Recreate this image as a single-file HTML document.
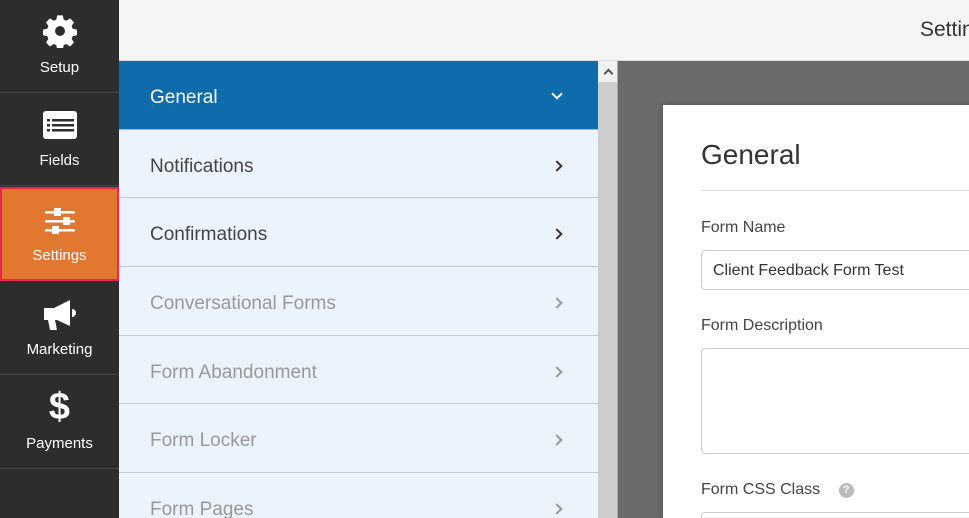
<!DOCTYPE html>
<html><head><meta charset="utf-8"><style>
*{margin:0;padding:0;box-sizing:border-box}
html,body{width:969px;height:518px;overflow:hidden}
body{position:relative;font-family:"Segoe UI","Liberation Sans",sans-serif;background:#6b6b6b}
.side{position:absolute;left:0;top:0;width:119px;height:518px;background:#2d2d2d}
.it{position:absolute;left:0;width:119px;height:93px;border-bottom:1px solid #454545;color:#fff;text-align:center;font-size:15px}
.it svg{position:absolute;left:50%;transform:translateX(-50%)}
.it span{position:absolute;left:0;right:0}
.top{position:absolute;left:119px;top:0;width:850px;height:61px;background:#f5f5f5;border-bottom:1px solid #ddd}
.menu{position:absolute;left:119px;top:61px;width:479px;height:457px;background:#ebf3fc;overflow:hidden}
.row{height:68.7px;border-bottom:1px solid #c2cbd6;font-size:19px;color:#444;padding-left:31px;line-height:74px;position:relative}
.row.dim{color:#999}
.row.act{background:#0e6cad;color:#fff;border-bottom:1px solid #9bb8d0}
.chev{position:absolute;left:434px;top:32px;width:8px;height:8px;border-right:2px solid #333;border-top:2px solid #333;transform:rotate(45deg)}
.dim .chev{border-color:#999}
.act .chev{border-color:#fff;transform:rotate(135deg);top:29px}
.sb{position:absolute;left:598px;top:61px;width:20px;height:457px;background:#cdcdcd;border-right:1px solid #aaa}
.sb div{height:21px;background:#f0f0f0;position:relative}
.sb div:after{content:"";position:absolute;left:7px;top:9px;width:5px;height:5px;border-left:2px solid #555;border-top:2px solid #555;transform:rotate(45deg)}
.card{position:absolute;left:663px;top:105px;width:320px;height:413px;background:#fff;box-shadow:0 0 6px rgba(0,0,0,.3);overflow:hidden}
.lbl{position:absolute;left:38px;font-size:16px;color:#444}
.inp{position:absolute;left:38px;width:300px;border:1px solid #ccc;border-radius:4px;background:#fff}
</style></head><body>
<div class="side">
 <div class="it" style="top:0">
  <svg width="34" height="34" viewBox="0 0 24 24" style="top:14px"><path fill="#fff" d="M10 1h4l.6 3 1.9.8 2.6-1.7 2.8 2.8-1.7 2.6.8 1.9 3 .6v4l-3 .6-.8 1.9 1.7 2.6-2.8 2.8-2.6-1.7-1.9.8-.6 3h-4l-.6-3-1.9-.8-2.6 1.7-2.8-2.8 1.7-2.6-.8-1.9-3-.6v-4l3-.6.8-1.9-1.7-2.6 2.8-2.8 2.6 1.7 1.900-.8zM12 8.5a3.5 3.5 0 1 0 0 7a3.5 3.5 0 1 0 0-7z"/></svg>
  <span style="top:59px">Setup</span></div>
 <div class="it" style="top:93px">
  <svg width="36" height="30" viewBox="0 0 36 30" style="top:17px"><rect x="1" y="1" width="34" height="28" rx="3" fill="#fff"/><g fill="#2d2d2d"><rect x="5" y="9" width="3" height="2.5"/><rect x="10" y="9" width="22" height="2.5"/><rect x="5" y="14" width="3" height="2.5"/><rect x="10" y="14" width="22" height="2.5"/><rect x="5" y="19" width="3" height="2.5"/><rect x="10" y="19" width="22" height="2.5"/></g></svg>
  <span style="top:59px">Fields</span></div>
 <div class="it" style="top:187px;height:94px;background:#e27730;border:2px solid #e8274d">
  <svg width="32" height="30" viewBox="0 0 32 30" style="top:18px"><g fill="#fff"><rect x="1" y="4" width="30" height="2.5"/><rect x="1" y="13" width="30" height="2.5"/><rect x="1" y="22" width="30" height="2.5"/><rect x="10" y="1" width="7" height="8"/><rect x="19" y="10" width="7" height="8"/><rect x="8" y="19" width="7" height="8"/></g></svg>
  <span style="top:58px">Settings</span></div>
 <div class="it" style="top:282px">
  <svg width="36" height="32" viewBox="0 0 36 32" style="top:17px"><path fill="#fff" d="M2 9h10l16-8v26L15 21l-2 0 2 10h-7l-2-10H2z"/><path fill="#fff" d="M30 10a4 4 0 0 1 0 8z"/></svg>
  <span style="top:59px">Marketing</span></div>
 <div class="it" style="top:376px">
  <span style="top:10px;font-size:38px;font-weight:bold;font-family:'Liberation Sans',sans-serif">$</span>
  <span style="top:59px">Payments</span></div>
</div>
<div class="top"><div style="position:absolute;left:801px;top:18px;font-size:21px;color:#333">Settings</div></div>
<div class="menu">
 <div class="row act">General<i class="chev"></i></div>
 <div class="row">Notifications<i class="chev"></i></div>
 <div class="row">Confirmations<i class="chev"></i></div>
 <div class="row dim">Conversational Forms<i class="chev"></i></div>
 <div class="row dim">Form Abandonment<i class="chev"></i></div>
 <div class="row dim">Form Locker<i class="chev"></i></div>
 <div class="row dim">Form Pages<i class="chev"></i></div>
</div>
<div class="sb"><div></div></div>
<div class="card">
 <div style="position:absolute;left:38px;top:34px;font-size:28px;color:#333">General</div>
 <div style="position:absolute;left:38px;top:85px;width:300px;height:1px;background:#ddd"></div>
 <div class="lbl" style="top:114px">Form Name</div>
 <div class="inp" style="top:145px;height:40px;font-size:16px;color:#333;padding:11px 11px 0">Client Feedback Form Test</div>
 <div class="lbl" style="top:212px">Form Description</div>
 <div class="inp" style="top:243px;height:106px"></div>
 <div class="lbl" style="top:376px">Form CSS Class <span style="display:inline-block;width:15px;height:15px;border-radius:50%;background:#bbb;color:#fff;font-size:11px;text-align:center;line-height:15px;font-weight:bold;margin-left:14px;vertical-align:1px">?</span></div>
 <div class="inp" style="top:407px;height:40px"></div>
</div>
</body></html>
